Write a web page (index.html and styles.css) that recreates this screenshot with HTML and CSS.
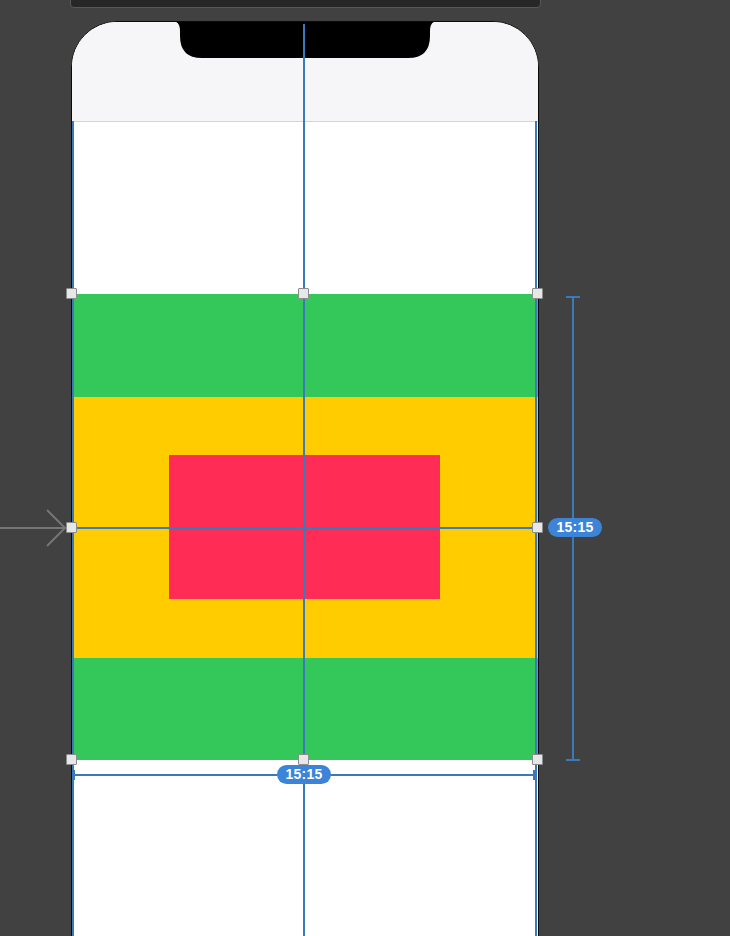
FILE: index.html
```html
<!DOCTYPE html>
<html>
<head>
<meta charset="utf-8">
<link rel="stylesheet" href="styles.css">
</head>
<body>
<div class="stage">
  <div class="toolbar"></div>

  <div class="phone">
    <div class="statusbar"></div>
    <svg class="notch" width="266" height="38" viewBox="0 0 266 38">
      <path d="M0,0 H266 Q258,0 258,10 V15 Q258,37 236,37 H30 Q8,37 8,15 V10 Q8,0 0,0 Z" fill="#000"/>
    </svg>
    <div class="content">
      <div class="green">
        <div class="yellow">
          <div class="red"></div>
        </div>
      </div>
    </div>
  </div>

  <!-- guide lines -->
  <div class="guide v center"></div>
  <div class="guide v left"></div>
  <div class="guide v right"></div>
  <div class="guide h middle"></div>

  <!-- width dimension -->
  <div class="guide h dimw"></div>
  <div class="tick vt tl"></div>
  <div class="tick vt tr"></div>

  <!-- height dimension -->
  <div class="guide v dimh"></div>
  <div class="tick ht tt"></div>
  <div class="tick ht tb"></div>

  <!-- entry arrow -->
  <svg class="arrow" width="70" height="40" viewBox="0 0 70 40">
    <path d="M0,20 H66 M47,2 L65,20 L47,38" fill="none" stroke="#767676" stroke-width="2"/>
  </svg>

  <!-- handles -->
  <div class="handle" style="left:66px;top:288px"></div>
  <div class="handle" style="left:298px;top:288px"></div>
  <div class="handle" style="left:532px;top:288px"></div>
  <div class="handle" style="left:66px;top:522px"></div>
  <div class="handle" style="left:532px;top:522px"></div>
  <div class="handle" style="left:66px;top:754px"></div>
  <div class="handle" style="left:298px;top:754px"></div>
  <div class="handle" style="left:532px;top:754px"></div>

  <div class="pill pill-right">15:15</div>
  <div class="pill pill-bottom">15:15</div>
</div>
</body>
</html>
```
FILE: styles.css
```css
html, body {
  margin: 0;
  padding: 0;
  background: #414141;
  overflow: hidden;
}
.stage {
  position: relative;
  width: 730px;
  height: 936px;
  overflow: hidden;
  background: #414141;
}
.toolbar {
  position: absolute;
  left: 70px;
  top: -4px;
  width: 469px;
  height: 10px;
  background: #272727;
  border: 1px solid #585858;
  border-radius: 0 0 4px 4px;
}
.phone {
  position: absolute;
  left: 71px;
  top: 21px;
  width: 466px;
  height: 1000px;
  background: #fff;
  border: 1.5px solid #0a0a0a;
  border-radius: 46px 46px 0 0;
  overflow: hidden;
}
.statusbar {
  height: 99px;
  background: #f6f5f7;
  border-bottom: 1px solid #d5d5d8;
}
.notch {
  position: absolute;
  left: 100px;
  top: -1px;
}
.content {
  padding-top: 172px;
}
.green {
  background: #34c85a;
  height: 363px;
  padding-top: 103px;
}
.yellow {
  background: #ffcc00;
  height: 203px;
  padding-top: 58px;
}
.red {
  background: #ff2d55;
  margin-left: 97px;
  width: 271px;
  height: 144px;
}
.guide {
  position: absolute;
  background: #3a79ba;
}
.guide.v { width: 2px; }
.guide.h { height: 2px; }
.guide.center { left: 303px; top: 24px; height: 912px; }
.guide.left { left: 72px; top: 121px; height: 815px; }
.guide.right { left: 535px; top: 121px; height: 815px; }
.guide.middle { left: 72px; top: 527px; width: 466px; }
.guide.dimw { left: 74px; top: 774px; width: 461px; }
.guide.dimh { left: 572px; top: 297px; height: 464px; }
.tick {
  position: absolute;
  background: #3a79ba;
}
.tick.vt { width: 2px; height: 10px; top: 770px; }
.tick.tl { left: 73px; }
.tick.tr { left: 533px; }
.tick.ht { height: 2px; width: 14px; left: 566px; }
.tick.tt { top: 296px; }
.tick.tb { top: 759px; }
.arrow {
  position: absolute;
  left: 0;
  top: 508px;
}
.handle {
  position: absolute;
  width: 9px;
  height: 9px;
  background: #e6e7e8;
  border: 1.5px solid #8c8c8c;
  border-radius: 1px;
}
.pill {
  position: absolute;
  height: 19px;
  line-height: 19px;
  padding: 0 8px;
  background: #3c84d8;
  color: #fff;
  border-radius: 10px;
  font-family: "Liberation Sans", Arial, sans-serif;
  font-weight: bold;
  font-size: 14px;
  letter-spacing: 0.2px;
  text-align: center;
  width: 38px;
}
.pill-right { left: 548px; top: 518px; }
.pill-bottom { left: 277px; top: 765px; }
```
